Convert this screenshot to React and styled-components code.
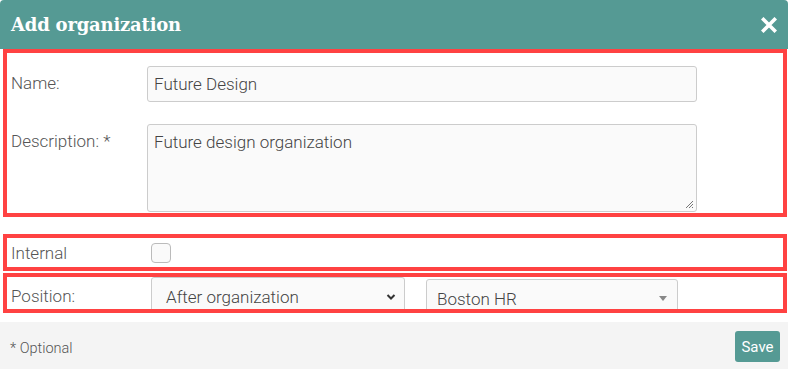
import styled, { createGlobalStyle } from "styled-components";

const GlobalStyle = createGlobalStyle`
  body {
    margin: 0;
    background: #fff;
    font-family: Roboto, "Liberation Sans", sans-serif;
    font-weight: 300;
  }
`;

const Dialog = styled.div`
  width: 788px;
  height: 369px;
  display: flex;
  flex-direction: column;
  background: #fff;
  overflow: hidden;
`;

const Header = styled.div`
  height: 49px;
  flex: none;
  display: flex;
  align-items: center;
  justify-content: space-between;
  padding: 0 11px 0 11px;
  background: #559a94;
  border-radius: 4px 4px 0 0;
  box-sizing: border-box;
  h1 {
    margin: 0;
    font-family: "DejaVu Serif", "Liberation Serif", serif;
    font-weight: 700;
    font-size: 18px;
    color: #fff;
    letter-spacing: -0.2px;
  }
`;

const Close = styled.button`
  border: 0;
  background: none;
  padding: 0;
  width: 16px;
  height: 16px;
  display: flex;
  cursor: pointer;
`;

const Group = styled.section`
  margin: ${({ $mt }) => $mt}px 1px 0 3px;
  border: 4px solid #ff4242;
  padding: ${({ $pad }) => $pad};
  display: grid;
  grid-template-columns: 136px 1fr;
  align-items: ${({ $align }) => $align || "center"};
  row-gap: 22px;
  height: ${({ $h }) => $h}px;
  box-sizing: border-box;
  overflow: hidden;
`;

const Label = styled.label`
  font-size: 17px;
  color: #555;
  padding-top: ${({ $top }) => $top || 0}px;
`;

const Field = styled.div`
  width: 550px;
  height: ${({ $h }) => $h}px;
  box-sizing: border-box;
  border: 1px solid #ccc;
  border-radius: 3px;
  background: #fafafa;
  padding: 7px 6px;
  font-size: 17px;
  color: #444;
  position: relative;
`;

const Grip = styled.svg`
  position: absolute;
  right: 2px;
  bottom: 2px;
`;

const Check = styled.div`
  width: 20px;
  height: 20px;
  margin-left: 4px;
  box-sizing: border-box;
  border: 1px solid #bbb;
  border-radius: 4px;
  background: #fafafa;
`;

const Selects = styled.div`
  display: flex;
  align-items: flex-start;
  gap: 21px;
  padding-left: 4px;
  align-self: start;
`;

const Select = styled.div`
  width: ${({ $w }) => $w}px;
  height: 36px;
  margin-top: ${({ $mt }) => $mt || 0}px;
  box-sizing: border-box;
  border: 1px solid #ccc;
  border-radius: 3px;
  background: #fafafa;
  display: flex;
  align-items: center;
  justify-content: space-between;
  padding: 3px ${({ $pr }) => $pr}px 0 ${({ $pl }) => $pl}px;
  font-size: 17px;
  color: #444;
`;

const Footer = styled.footer`
  margin-top: 9px;
  flex: 1;
  background: #f4f4f4;
  display: flex;
  align-items: center;
  justify-content: space-between;
  padding: 0 8px 0 10px;
  span {
    font-size: 14.5px;
    color: #555;
    padding-top: 5px;
  }
`;

const SaveButton = styled.button`
  width: 45px;
  height: 31px;
  border: 0;
  border-radius: 3px;
  background: #559a94;
  color: #fff;
  font-family: Roboto, "Liberation Sans", sans-serif;
  font-weight: 400;
  font-size: 15px;
  padding: 0;
  margin-top: 2px;
`;

export default function App() {
  return (
    <>
      <GlobalStyle />
      <Dialog>
        <Header>
          <h1>Add organization</h1>
          <Close aria-label="close">
            <svg width="16" height="16" viewBox="0 0 16 16">
              <path
                d="M2.5 2.5 L13.5 13.5 M13.5 2.5 L2.5 13.5"
                stroke="#fff"
                strokeWidth="3.6"
                strokeLinecap="square"
              />
            </svg>
          </Close>
        </Header>

        <Group $mt={0} $h={168} $pad="13px 4px 1px 4px" $align="start">
          <Label $top={7}>Name:</Label>
          <Field $h={36}>Future Design</Field>
          <Label $top={7}>Description: *</Label>
          <Field $h={88}>
            Future design organization
            <Grip width="10" height="10" viewBox="0 0 10 10">
              <path d="M9 2 L2 9 M9 5 L5 9 M9 8 L8 9" stroke="#777" strokeWidth="1" />
            </Grip>
          </Field>
        </Group>

        <Group $mt={17} $h={37} $pad="0 4px">
          <Label>Internal</Label>
          <Check />
        </Group>

        <Group $mt={2} $h={40} $pad="0 4px">
          <Label>Position:</Label>
          <Selects>
            <Select $w={254} $pl={14} $pr={8} $mt={0}>
              After organization
              <svg width="10" height="8" viewBox="0 0 10 8">
                <path d="M1.5 2 L5 5.5 L8.5 2" stroke="#333" strokeWidth="2" fill="none" />
              </svg>
            </Select>
            <Select $w={252} $pl={10} $pr={10} $mt={2}>
              Boston HR
              <svg width="8" height="5" viewBox="0 0 8 5">
                <path d="M0 0 L8 0 L4 5 Z" fill="#888" />
              </svg>
            </Select>
          </Selects>
        </Group>

        <Footer>
          <span>* Optional</span>
          <SaveButton>Save</SaveButton>
        </Footer>
      </Dialog>
    </>
  );
}
